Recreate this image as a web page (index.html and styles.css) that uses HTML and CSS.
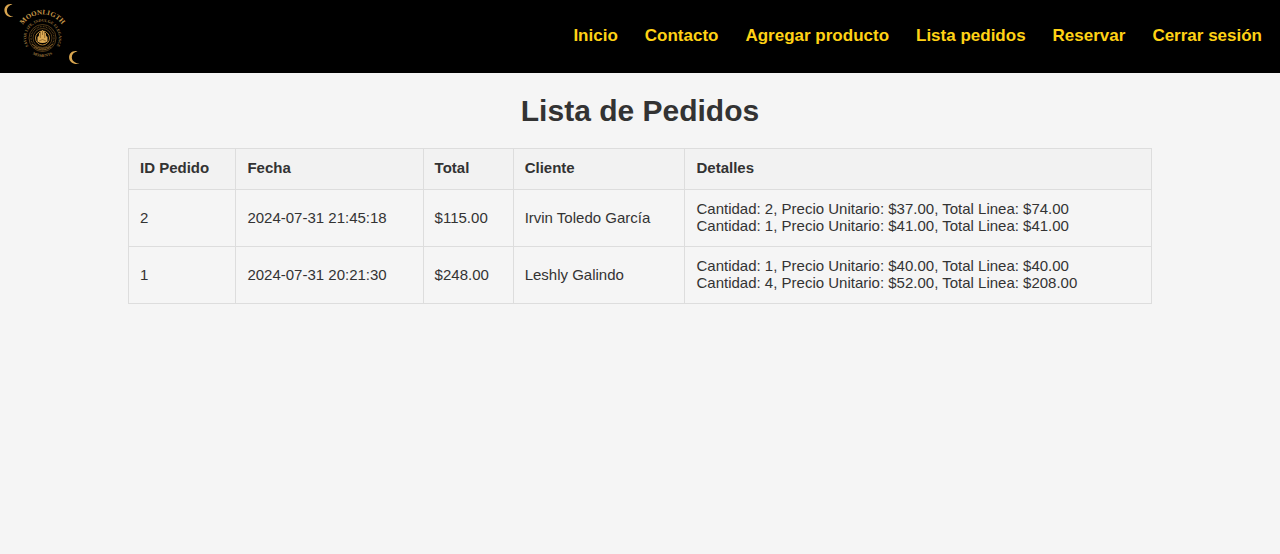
FILE: index.html
```html
<!DOCTYPE html>
<html lang="es">
<head>
<meta charset="utf-8">
<meta name="viewport" content="width=device-width, initial-scale=1">
<title>Lista de Pedidos</title>
<link rel="stylesheet" href="styles.css">
</head>
<body>
<header class="site-header">
  <a class="brand" href="#" aria-label="Moonligth">
    <svg class="logo" viewBox="0 0 84 73" aria-hidden="true">
      <defs>
        <path id="arc-name" d="M19 38a23.500 23.500 0 0 1 47 0"/>
        <path id="arc-top" d="M31 49.500a16.300 16.300 0 1 1 23 0"/>
        <path id="arc-bottom" d="M23.500 38a19 19 0 0 0 38 0"/>
      </defs>
      <g fill="#d9a650">
        <path d="M12.500 4.200C7.300 3 4.200 6.500 4.400 10.500c.2 4.500 4.500 7.500 9 6.200C9.200 16.200 7 13.500 6.900 10.500 6.800 7.500 8.800 5.300 12.500 4.200z"/>
        <path d="M77.500 51.300c-5-1.200-8.500 2-8.400 6.200.1 4.600 5 7.600 10.300 6.200-4.800-.5-7.500-3.200-7.600-6.200-.1-3 2-5.200 5.700-6.200z"/>
      </g>
      <text class="logo-name"><textPath href="#arc-name" startOffset="50%" text-anchor="middle">MOONLIGTH</textPath></text>
      <text class="logo-motto"><textPath href="#arc-top" startOffset="50%" text-anchor="middle">SAVOR LIFE, INDULGE ELEGANCE</textPath></text>
      <text class="logo-motto"><textPath href="#arc-bottom" startOffset="50%" text-anchor="middle">MOMENTS</textPath></text>
      <g fill="none" stroke="#8a6228">
        <circle cx="42.500" cy="38" r="13.500" stroke-width=".6"/>
        <circle cx="42.500" cy="38" r="11.500" stroke-width="1.300" stroke-dasharray=".8 .8" opacity=".7"/>
        <circle cx="42.500" cy="38" r="9.500" stroke-width=".6"/>
        <circle cx="42.500" cy="38" r="7" stroke="#b58335" stroke-width="1"/>
        <path d="M32 44q10.500 9 21 0M34 47q8.500 6 17 0" stroke-width=".8"/>
      </g>
      <path fill="#dcaa55" d="M37.500 37l1.300-1 .3-3 1.200 0 .3-2h1.200l.7-1.200.7 1.200h1.200l.3 2h1.200l.3 3 1.300 1v4.500q-5 3-10 0z"/>
      <path fill="none" stroke="#6a4516" stroke-width=".6" d="M40.300 33v5M42.500 31v4M44.700 33v5M39 41q3.500-3 7 0"/>
    </svg>
  </a>
  <nav class="site-nav" aria-label="Principal">
    <a href="#">Inicio</a>
    <a href="#">Contacto</a>
    <a href="#">Agregar producto</a>
    <a href="#">Lista pedidos</a>
    <a href="#">Reservar</a>
    <a href="#">Cerrar sesión</a>
  </nav>
</header>
<main>
  <h1 class="page-title">Lista de Pedidos</h1>
  <table class="orders">
    <colgroup>
      <col class="col-id"><col class="col-date"><col class="col-total"><col class="col-client"><col>
    </colgroup>
    <thead>
      <tr><th scope="col">ID Pedido</th><th scope="col">Fecha</th><th scope="col">Total</th><th scope="col">Cliente</th><th scope="col">Detalles</th></tr>
    </thead>
    <tbody>
      <tr>
        <td>2</td><td>2024-07-31 21:45:18</td><td>$115.00</td><td>Irvin Toledo García</td>
        <td>Cantidad: 2, Precio Unitario: $37.00, Total Linea: $74.00<br>Cantidad: 1, Precio Unitario: $41.00, Total Linea: $41.00</td>
      </tr>
      <tr>
        <td>1</td><td>2024-07-31 20:21:30</td><td>$248.00</td><td>Leshly Galindo</td>
        <td>Cantidad: 1, Precio Unitario: $40.00, Total Linea: $40.00<br>Cantidad: 4, Precio Unitario: $52.00, Total Linea: $208.00</td>
      </tr>
    </tbody>
  </table>
</main>
</body>
</html>
```
FILE: styles.css
```css
body {
  margin: 0;
  background: #f5f5f5;
  color: #333;
  font-family: "Liberation Sans", Arial, sans-serif;
  font-size: 15px;
  line-height: 17px;
}

.site-header {
  display: flex;
  justify-content: space-between;
  align-items: center;
  background: #000;
}

.brand,
.logo {
  display: block;
}

.logo {
  width: 84px;
  height: 73px;
}

.logo-name,
.logo-motto {
  font-family: "Liberation Serif", serif;
  font-weight: bold;
}

.logo-name {
  fill: #c99a4a;
  font-size: 7px;
}

.logo-motto {
  fill: #9c763c;
  font-size: 4px;
}

.site-nav {
  display: flex;
  gap: 27px;
  padding: 0 18px 2px;
}

.site-nav a {
  color: #ffd215;
  font-size: 17px;
  font-weight: bold;
  line-height: 20px;
  text-decoration: none;
}

.page-title {
  margin: 20px 0;
  font-size: 30px;
  line-height: 35px;
  text-align: center;
}

.orders {
  width: 80%;
  margin: 0 auto;
  border-collapse: collapse;
}

.orders th,
.orders td {
  padding: 10px 11px 12px;
  border: 1px solid #ddd;
  text-align: left;
}

.orders th {
  background: #f2f2f2;
  line-height: 18px;
}

.col-id {
  width: 10.5%;
}

.col-date {
  width: 18.3%;
}

.col-total {
  width: 8.8%;
}

.col-client {
  width: 16.8%;
}
```
